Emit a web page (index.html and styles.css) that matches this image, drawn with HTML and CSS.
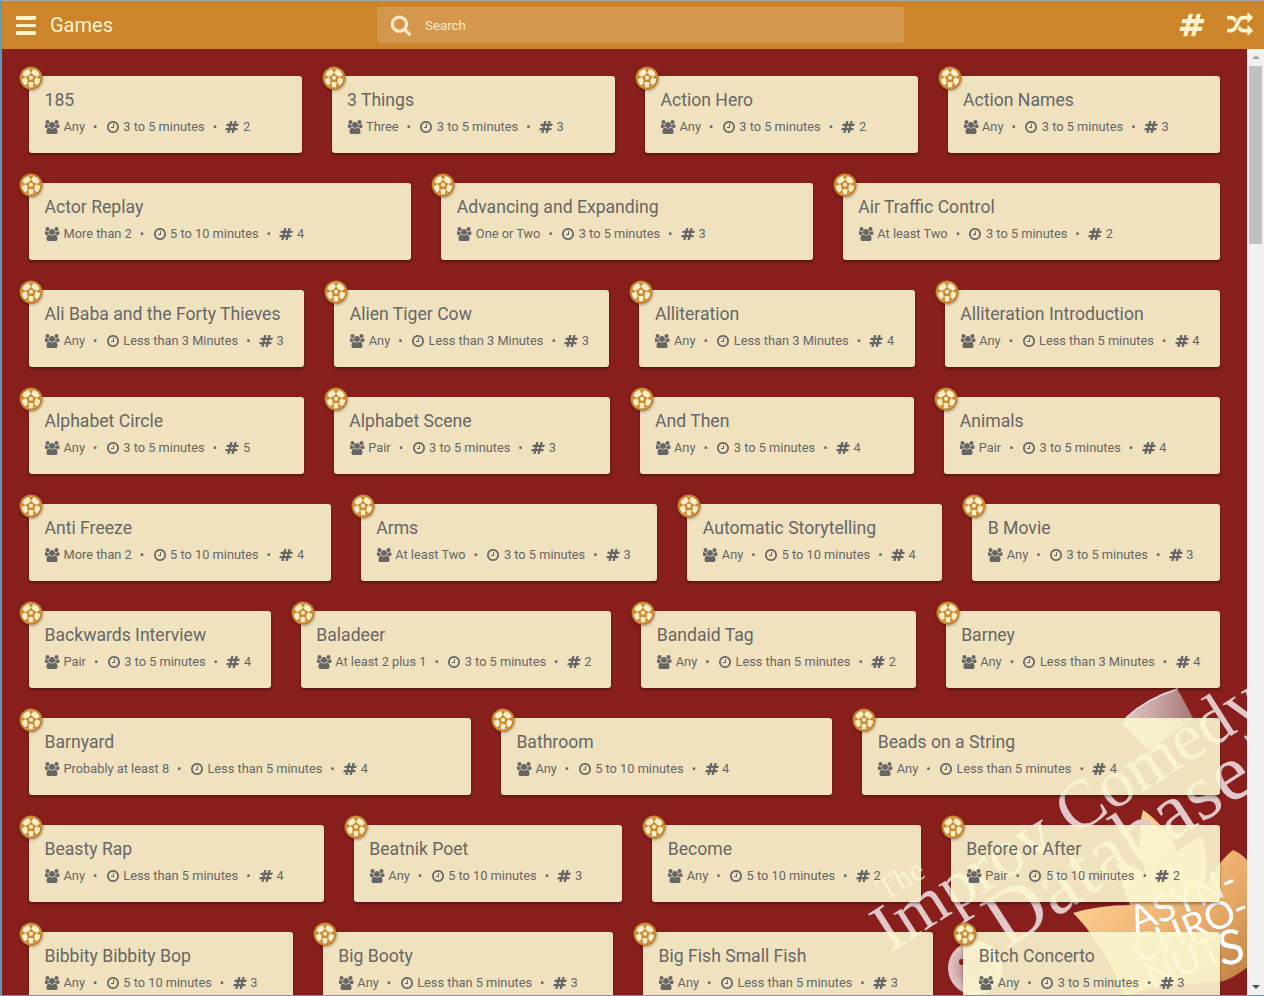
FILE: index.html
```html
<!DOCTYPE html>
<html lang="en">
<head>
<meta charset="utf-8">
<title>Games</title>
<link rel="stylesheet" href="styles.css">
</head>
<body>
<svg class="defs" width="0" height="0">
  <defs>
    <symbol id="i-users" viewBox="0 0 1920 1792"><path d="M529 896q-162 5-265 128h-134q-82 0-138-40.5t-56-118.5q0-353 124-353 6 0 43.5 21t97.5 42.5 119 21.5q67 0 133-23-5 37-5 66 0 139 81 256zm1071 637q0 120-73 189.5t-194 69.5h-874q-121 0-194-69.5t-73-189.5q0-53 3.5-103.5t14-109 26.5-108.5 43-97.5 62-81 85.5-53.5 111.5-20q10 0 43 21.5t73 48 107 48 135 21.5 135-21.5 107-48 73-48 43-21.5q61 0 111.5 20t85.5 53.5 62 81 43 97.5 26.5 108.5 14 109 3.5 103.5zm-1024-1277q0 106-75 181t-181 75-181-75-75-181 75-181 181-75 181 75 75 181zm704 384q0 159-112.5 271.5t-271.5 112.5-271.5-112.5-112.5-271.5 112.5-271.5 271.5-112.5 271.5 112.5 112.5 271.5zm576 225q0 78-56 118.5t-138 40.5h-134q-103-123-265-128 81-117 81-256 0-29-5-66 66 23 133 23 59 0 119-21.5t97.5-42.5 43.5-21q124 0 124 353zm-128-609q0 106-75 181t-181 75-181-75-75-181 75-181 181-75 181 75 75 181z"/></symbol>
    <symbol id="i-clock" viewBox="0 0 1792 1792"><path d="M1024 544v448q0 14-9 23t-23 9h-320q-14 0-23-9t-9-23v-64q0-14 9-23t23-9h224v-352q0-14 9-23t23-9h64q14 0 23 9t9 23zm416 352q0-148-73-273t-198-198-273-73-273 73-198 198-73 273 73 273 198 198 273 73 273-73 198-198 73-273zm224 0q0 209-103 385.5t-279.5 279.5-385.5 103-385.5-103-279.5-279.5-103-385.5 103-385.5 279.5-279.5 385.5-103 385.5 103 279.5 279.5 103 385.5z"/></symbol>
    <symbol id="i-hash" viewBox="0 0 1792 1792"><path d="M991 1024l64-256h-254l-64 256h254zm768-504l-56 224q-7 24-31 24h-327l-64 256h311q15 0 25 12 10 14 6 28l-56 224q-5 24-31 24h-327l-81 328q-7 24-31 24h-224q-16 0-26-12-9-12-6-28l78-312h-254l-81 328q-7 24-31 24h-225q-15 0-25-12-9-12-6-28l78-312h-311q-15 0-25-12-9-12-6-28l56-224q7-24 31-24h327l64-256h-311q-15 0-25-12-10-14-6-28l56-224q5-24 31-24h327l81-328q7-24 32-24h224q15 0 25 12 9 12 6 28l-78 312h254l81-328q7-24 32-24h224q15 0 25 12 9 12 6 28l-78 312h311q15 0 25 12 9 12 6 28z"/></symbol>
    <symbol id="i-random" viewBox="0 0 1792 1792"><path d="M666 481q-60 92-137 273-22-45-37-72.5t-40.5-63.5-51-56.5-63-35-81.5-14h-224q-14 0-23-9t-9-23v-192q0-14 9-23t23-9h224q250 0 410 225zm1126 799q0 14-9 23l-320 320q-9 9-23 9-13 0-22.5-9.5t-9.5-22.5v-192q-32 0-85 .5t-81 1-73-1-71-5-64-10.5-63-18.5-58-28.5-59-40-55-53.5-56-69.5q59-93 136-273 22 45 37 72.5t40.5 63.5 51 56.5 63 35 81.5 14h256v-192q0-14 9-23t23-9q12 0 24 10l319 319q9 9 9 23zm0-896q0 14-9 23l-320 320q-9 9-23 9-13 0-22.5-9.5t-9.5-22.5v-192h-256q-48 0-87 15t-69 45-51 61.5-45 77.5q-32 62-78 171-29 66-49.5 111t-54 105-64 100-74 83-90 68.5-106.5 42-128 16.5h-224q-14 0-23-9t-9-23v-192q0-14 9-23t23-9h224q48 0 87-15t69-45 51-61.5 45-77.5q32-62 78-171 29-66 49.5-111t54-105 64-100 74-83 90-68.5 106.5-42 128-16.5h256v-192q0-14 9-23t23-9q12 0 24 10l319 319q9 9 9 23z"/></symbol>
    <symbol id="i-search" viewBox="0 0 1792 1792"><path d="M1216 832q0-185-131.5-316.5t-316.5-131.5-316.5 131.5-131.5 316.5 131.5 316.5 316.5 131.5 316.5-131.5 131.5-316.5zm512 832q0 52-38 90t-90 38q-54 0-90-38l-343-342q-179 124-399 124-143 0-273.5-55.5t-225-150-150-225-55.5-273.5 55.5-273.5 150-225 225-150 273.5-55.5 273.5 55.5 225 150 150 225 55.5 273.5q0 220-124 399l343 343q37 37 37 90z"/></symbol>
    <symbol id="i-badge" viewBox="0 0 24 24">
      <circle cx="12" cy="12" r="11.5" fill="#c9832c"/>
      <circle cx="12" cy="12" r="9.4" fill="#fbeecb"/>
      <path d="M12 6.6 14.6 9.6 17.6 10.4 15.6 13.4 15.6 17 12 15.8 8.4 17 8.4 13.4 6.4 10.4 9.4 9.6Z" fill="#cf8a30"/>
      <path d="M9.6 3 14.4 3 12 7ZM20.8 8.6 21.6 13.2 17.2 11.4ZM18 19.6 13.8 21.2 14.6 16.6ZM6 19.6 10.2 21.2 9.4 16.6ZM3.2 8.6 2.4 13.2 6.8 11.4Z" fill="#cf8a30"/>
      <circle cx="12" cy="11.8" r="2" fill="#fbeecb"/>
    </symbol>
    <linearGradient id="g-leaf" x1="0" y1="0" x2="1" y2="1">
      <stop offset="0.25" stop-color="#ffcf92"/>
      <stop offset="0.7" stop-color="#e5a766"/>
      <stop offset="1" stop-color="#b5783a"/>
    </linearGradient>
    <linearGradient id="g-cup" x1="0" y1="0" x2="1" y2="0">
      <stop offset="0" stop-color="#e6cccc"/>
      <stop offset="1" stop-color="#a87878"/>
    </linearGradient>
    <radialGradient id="g-disc">
      <stop offset="0" stop-color="#a86f70"/>
      <stop offset="1" stop-color="#e3c8c8"/>
    </radialGradient>
  </defs>
</svg>
<div class="frame">
  <header class="topbar">
    <div class="menu-icon"><span></span><span></span><span></span></div>
    <h1 class="brand">Games</h1>
    <div class="search">
      <svg class="search-icon"><use href="#i-search"/></svg>
      <span class="search-text">Search</span>
    </div>
    <svg class="top-hash"><use href="#i-hash"/></svg>
    <svg class="top-random"><use href="#i-random"/></svg>
  </header>
  <div class="body-row">
    <main class="content">
      <svg class="watermark" viewBox="840 680 407 315" width="407" height="315">
        <path class="wm-cup" d="M1122 723Q1145 700 1178 690L1193 718L1150 752Z"/>
        <path class="wm-rim" d="M1126 718Q1148 698 1178 689"/>
        <circle class="wm-disc" cx="975" cy="968" r="27"/>
        <circle class="wm-hole" cx="962" cy="962" r="3"/>
        <path class="wm-leaf" d="M1143 810Q1165 825 1178 852Q1188 840 1202 837Q1210 860 1205 885Q1220 860 1233 850Q1245 855 1250 865L1250 965Q1235 978 1220 982L1160 985L1125 996Q1110 960 1093 937Q1085 925 1073 913Q1100 905 1130 905Q1122 885 1117 863Q1130 862 1146 875Q1135 840 1143 810Z"/>
        <text class="wm-serif wm-the" transform="translate(884 901) rotate(-30)">The</text>
        <text class="wm-serif wm-improv" transform="translate(890 953) rotate(-32.5)">Improv Comedy</text>
        <text class="wm-serif wm-data" transform="translate(1006 950) rotate(-33)">Database</text>
        <text class="wm-sans wm-its" transform="translate(1180 890) rotate(-23)">its</text>
        <text class="wm-sans wm-l1" transform="translate(1136 934) rotate(-23)">ASYN-</text>
        <text class="wm-sans wm-l2" transform="translate(1139 964) rotate(-23)">CHRO-</text>
        <text class="wm-sans wm-l3" transform="translate(1152 990) rotate(-23)">NUT</text>
        <text class="wm-sans wm-s" transform="translate(1221 966) rotate(-10)">S</text>
      </svg>

      <section class="row">
        <article class="card"><svg class="badge"><use href="#i-badge"/></svg><h2>185</h2><p class="meta"><svg class="ic-users"><use href="#i-users"/></svg><span>Any</span><b>•</b><svg class="ic"><use href="#i-clock"/></svg><span>3 to 5 minutes</span><b>•</b><svg class="ic"><use href="#i-hash"/></svg><span>2</span></p></article>
        <article class="card"><svg class="badge"><use href="#i-badge"/></svg><h2>3 Things</h2><p class="meta"><svg class="ic-users"><use href="#i-users"/></svg><span>Three</span><b>•</b><svg class="ic"><use href="#i-clock"/></svg><span>3 to 5 minutes</span><b>•</b><svg class="ic"><use href="#i-hash"/></svg><span>3</span></p></article>
        <article class="card"><svg class="badge"><use href="#i-badge"/></svg><h2>Action Hero</h2><p class="meta"><svg class="ic-users"><use href="#i-users"/></svg><span>Any</span><b>•</b><svg class="ic"><use href="#i-clock"/></svg><span>3 to 5 minutes</span><b>•</b><svg class="ic"><use href="#i-hash"/></svg><span>2</span></p></article>
        <article class="card"><svg class="badge"><use href="#i-badge"/></svg><h2>Action Names</h2><p class="meta"><svg class="ic-users"><use href="#i-users"/></svg><span>Any</span><b>•</b><svg class="ic"><use href="#i-clock"/></svg><span>3 to 5 minutes</span><b>•</b><svg class="ic"><use href="#i-hash"/></svg><span>3</span></p></article>
      </section>
      <section class="row">
        <article class="card"><svg class="badge"><use href="#i-badge"/></svg><h2>Actor Replay</h2><p class="meta"><svg class="ic-users"><use href="#i-users"/></svg><span>More than 2</span><b>•</b><svg class="ic"><use href="#i-clock"/></svg><span>5 to 10 minutes</span><b>•</b><svg class="ic"><use href="#i-hash"/></svg><span>4</span></p></article>
        <article class="card"><svg class="badge"><use href="#i-badge"/></svg><h2>Advancing and Expanding</h2><p class="meta"><svg class="ic-users"><use href="#i-users"/></svg><span>One or Two</span><b>•</b><svg class="ic"><use href="#i-clock"/></svg><span>3 to 5 minutes</span><b>•</b><svg class="ic"><use href="#i-hash"/></svg><span>3</span></p></article>
        <article class="card"><svg class="badge"><use href="#i-badge"/></svg><h2>Air Traffic Control</h2><p class="meta"><svg class="ic-users"><use href="#i-users"/></svg><span>At least Two</span><b>•</b><svg class="ic"><use href="#i-clock"/></svg><span>3 to 5 minutes</span><b>•</b><svg class="ic"><use href="#i-hash"/></svg><span>2</span></p></article>
      </section>
      <section class="row">
        <article class="card"><svg class="badge"><use href="#i-badge"/></svg><h2>Ali Baba and the Forty Thieves</h2><p class="meta"><svg class="ic-users"><use href="#i-users"/></svg><span>Any</span><b>•</b><svg class="ic"><use href="#i-clock"/></svg><span>Less than 3 Minutes</span><b>•</b><svg class="ic"><use href="#i-hash"/></svg><span>3</span></p></article>
        <article class="card"><svg class="badge"><use href="#i-badge"/></svg><h2>Alien Tiger Cow</h2><p class="meta"><svg class="ic-users"><use href="#i-users"/></svg><span>Any</span><b>•</b><svg class="ic"><use href="#i-clock"/></svg><span>Less than 3 Minutes</span><b>•</b><svg class="ic"><use href="#i-hash"/></svg><span>3</span></p></article>
        <article class="card"><svg class="badge"><use href="#i-badge"/></svg><h2>Alliteration</h2><p class="meta"><svg class="ic-users"><use href="#i-users"/></svg><span>Any</span><b>•</b><svg class="ic"><use href="#i-clock"/></svg><span>Less than 3 Minutes</span><b>•</b><svg class="ic"><use href="#i-hash"/></svg><span>4</span></p></article>
        <article class="card"><svg class="badge"><use href="#i-badge"/></svg><h2>Alliteration Introduction</h2><p class="meta"><svg class="ic-users"><use href="#i-users"/></svg><span>Any</span><b>•</b><svg class="ic"><use href="#i-clock"/></svg><span>Less than 5 minutes</span><b>•</b><svg class="ic"><use href="#i-hash"/></svg><span>4</span></p></article>
      </section>
      <section class="row">
        <article class="card"><svg class="badge"><use href="#i-badge"/></svg><h2>Alphabet Circle</h2><p class="meta"><svg class="ic-users"><use href="#i-users"/></svg><span>Any</span><b>•</b><svg class="ic"><use href="#i-clock"/></svg><span>3 to 5 minutes</span><b>•</b><svg class="ic"><use href="#i-hash"/></svg><span>5</span></p></article>
        <article class="card"><svg class="badge"><use href="#i-badge"/></svg><h2>Alphabet Scene</h2><p class="meta"><svg class="ic-users"><use href="#i-users"/></svg><span>Pair</span><b>•</b><svg class="ic"><use href="#i-clock"/></svg><span>3 to 5 minutes</span><b>•</b><svg class="ic"><use href="#i-hash"/></svg><span>3</span></p></article>
        <article class="card"><svg class="badge"><use href="#i-badge"/></svg><h2>And Then</h2><p class="meta"><svg class="ic-users"><use href="#i-users"/></svg><span>Any</span><b>•</b><svg class="ic"><use href="#i-clock"/></svg><span>3 to 5 minutes</span><b>•</b><svg class="ic"><use href="#i-hash"/></svg><span>4</span></p></article>
        <article class="card"><svg class="badge"><use href="#i-badge"/></svg><h2>Animals</h2><p class="meta"><svg class="ic-users"><use href="#i-users"/></svg><span>Pair</span><b>•</b><svg class="ic"><use href="#i-clock"/></svg><span>3 to 5 minutes</span><b>•</b><svg class="ic"><use href="#i-hash"/></svg><span>4</span></p></article>
      </section>
      <section class="row">
        <article class="card"><svg class="badge"><use href="#i-badge"/></svg><h2>Anti Freeze</h2><p class="meta"><svg class="ic-users"><use href="#i-users"/></svg><span>More than 2</span><b>•</b><svg class="ic"><use href="#i-clock"/></svg><span>5 to 10 minutes</span><b>•</b><svg class="ic"><use href="#i-hash"/></svg><span>4</span></p></article>
        <article class="card"><svg class="badge"><use href="#i-badge"/></svg><h2>Arms</h2><p class="meta"><svg class="ic-users"><use href="#i-users"/></svg><span>At least Two</span><b>•</b><svg class="ic"><use href="#i-clock"/></svg><span>3 to 5 minutes</span><b>•</b><svg class="ic"><use href="#i-hash"/></svg><span>3</span></p></article>
        <article class="card"><svg class="badge"><use href="#i-badge"/></svg><h2>Automatic Storytelling</h2><p class="meta"><svg class="ic-users"><use href="#i-users"/></svg><span>Any</span><b>•</b><svg class="ic"><use href="#i-clock"/></svg><span>5 to 10 minutes</span><b>•</b><svg class="ic"><use href="#i-hash"/></svg><span>4</span></p></article>
        <article class="card"><svg class="badge"><use href="#i-badge"/></svg><h2>B Movie</h2><p class="meta"><svg class="ic-users"><use href="#i-users"/></svg><span>Any</span><b>•</b><svg class="ic"><use href="#i-clock"/></svg><span>3 to 5 minutes</span><b>•</b><svg class="ic"><use href="#i-hash"/></svg><span>3</span></p></article>
      </section>
      <section class="row">
        <article class="card"><svg class="badge"><use href="#i-badge"/></svg><h2>Backwards Interview</h2><p class="meta"><svg class="ic-users"><use href="#i-users"/></svg><span>Pair</span><b>•</b><svg class="ic"><use href="#i-clock"/></svg><span>3 to 5 minutes</span><b>•</b><svg class="ic"><use href="#i-hash"/></svg><span>4</span></p></article>
        <article class="card"><svg class="badge"><use href="#i-badge"/></svg><h2>Baladeer</h2><p class="meta"><svg class="ic-users"><use href="#i-users"/></svg><span>At least 2 plus 1</span><b>•</b><svg class="ic"><use href="#i-clock"/></svg><span>3 to 5 minutes</span><b>•</b><svg class="ic"><use href="#i-hash"/></svg><span>2</span></p></article>
        <article class="card"><svg class="badge"><use href="#i-badge"/></svg><h2>Bandaid Tag</h2><p class="meta"><svg class="ic-users"><use href="#i-users"/></svg><span>Any</span><b>•</b><svg class="ic"><use href="#i-clock"/></svg><span>Less than 5 minutes</span><b>•</b><svg class="ic"><use href="#i-hash"/></svg><span>2</span></p></article>
        <article class="card"><svg class="badge"><use href="#i-badge"/></svg><h2>Barney</h2><p class="meta"><svg class="ic-users"><use href="#i-users"/></svg><span>Any</span><b>•</b><svg class="ic"><use href="#i-clock"/></svg><span>Less than 3 Minutes</span><b>•</b><svg class="ic"><use href="#i-hash"/></svg><span>4</span></p></article>
      </section>
      <section class="row">
        <article class="card"><svg class="badge"><use href="#i-badge"/></svg><h2>Barnyard</h2><p class="meta"><svg class="ic-users"><use href="#i-users"/></svg><span>Probably at least 8</span><b>•</b><svg class="ic"><use href="#i-clock"/></svg><span>Less than 5 minutes</span><b>•</b><svg class="ic"><use href="#i-hash"/></svg><span>4</span></p></article>
        <article class="card"><svg class="badge"><use href="#i-badge"/></svg><h2>Bathroom</h2><p class="meta"><svg class="ic-users"><use href="#i-users"/></svg><span>Any</span><b>•</b><svg class="ic"><use href="#i-clock"/></svg><span>5 to 10 minutes</span><b>•</b><svg class="ic"><use href="#i-hash"/></svg><span>4</span></p></article>
        <article class="card"><svg class="badge"><use href="#i-badge"/></svg><h2>Beads on a String</h2><p class="meta"><svg class="ic-users"><use href="#i-users"/></svg><span>Any</span><b>•</b><svg class="ic"><use href="#i-clock"/></svg><span>Less than 5 minutes</span><b>•</b><svg class="ic"><use href="#i-hash"/></svg><span>4</span></p></article>
      </section>
      <section class="row">
        <article class="card"><svg class="badge"><use href="#i-badge"/></svg><h2>Beasty Rap</h2><p class="meta"><svg class="ic-users"><use href="#i-users"/></svg><span>Any</span><b>•</b><svg class="ic"><use href="#i-clock"/></svg><span>Less than 5 minutes</span><b>•</b><svg class="ic"><use href="#i-hash"/></svg><span>4</span></p></article>
        <article class="card"><svg class="badge"><use href="#i-badge"/></svg><h2>Beatnik Poet</h2><p class="meta"><svg class="ic-users"><use href="#i-users"/></svg><span>Any</span><b>•</b><svg class="ic"><use href="#i-clock"/></svg><span>5 to 10 minutes</span><b>•</b><svg class="ic"><use href="#i-hash"/></svg><span>3</span></p></article>
        <article class="card"><svg class="badge"><use href="#i-badge"/></svg><h2>Become</h2><p class="meta"><svg class="ic-users"><use href="#i-users"/></svg><span>Any</span><b>•</b><svg class="ic"><use href="#i-clock"/></svg><span>5 to 10 minutes</span><b>•</b><svg class="ic"><use href="#i-hash"/></svg><span>2</span></p></article>
        <article class="card"><svg class="badge"><use href="#i-badge"/></svg><h2>Before or After</h2><p class="meta"><svg class="ic-users"><use href="#i-users"/></svg><span>Pair</span><b>•</b><svg class="ic"><use href="#i-clock"/></svg><span>5 to 10 minutes</span><b>•</b><svg class="ic"><use href="#i-hash"/></svg><span>2</span></p></article>
      </section>
      <section class="row">
        <article class="card"><svg class="badge"><use href="#i-badge"/></svg><h2>Bibbity Bibbity Bop</h2><p class="meta"><svg class="ic-users"><use href="#i-users"/></svg><span>Any</span><b>•</b><svg class="ic"><use href="#i-clock"/></svg><span>5 to 10 minutes</span><b>•</b><svg class="ic"><use href="#i-hash"/></svg><span>3</span></p></article>
        <article class="card"><svg class="badge"><use href="#i-badge"/></svg><h2>Big Booty</h2><p class="meta"><svg class="ic-users"><use href="#i-users"/></svg><span>Any</span><b>•</b><svg class="ic"><use href="#i-clock"/></svg><span>Less than 5 minutes</span><b>•</b><svg class="ic"><use href="#i-hash"/></svg><span>3</span></p></article>
        <article class="card"><svg class="badge"><use href="#i-badge"/></svg><h2>Big Fish Small Fish</h2><p class="meta"><svg class="ic-users"><use href="#i-users"/></svg><span>Any</span><b>•</b><svg class="ic"><use href="#i-clock"/></svg><span>Less than 5 minutes</span><b>•</b><svg class="ic"><use href="#i-hash"/></svg><span>3</span></p></article>
        <article class="card"><svg class="badge"><use href="#i-badge"/></svg><h2>Bitch Concerto</h2><p class="meta"><svg class="ic-users"><use href="#i-users"/></svg><span>Any</span><b>•</b><svg class="ic"><use href="#i-clock"/></svg><span>3 to 5 minutes</span><b>•</b><svg class="ic"><use href="#i-hash"/></svg><span>3</span></p></article>
      </section>
    </main>
    <div class="scrollbar">
      <span class="arrow-up"></span>
      <span class="thumb"></span>
      <span class="arrow-down"></span>
    </div>
  </div>
</div>
</body>
</html>
```
FILE: styles.css
```css
* { box-sizing: border-box; }
html, body { margin: 0; height: 100%; overflow: hidden; }
body { font-family: Roboto, "Liberation Sans", sans-serif; background: #5b9bb5; }
.defs { position: absolute; }

.frame {
  height: 996px;
  display: flex;
  flex-direction: column;
  border-top: 1px solid #a8a8a8;
  border-left: 2px solid #5b9bb5;
  border-bottom: 1px solid #5b9bc0;
}

.topbar {
  flex: 0 0 48px;
  display: flex;
  align-items: center;
  background: #cc852b;
  color: #fff3cd;
  padding-left: 14px;
}
.menu-icon { width: 20px; display: flex; flex-direction: column; gap: 4px; margin-top: 1px; }
.menu-icon span { height: 3.5px; background: #fff3cd; border-radius: 1px; }
.brand { margin: 0 0 0 14px; width: 327px; font-size: 20px; font-weight: 400; line-height: 24px; }
.search {
  width: 527px;
  height: 36px;
  display: flex;
  align-items: center;
  background: rgba(255, 255, 255, 0.16);
  border-radius: 2px;
  padding-left: 13px;
}
.search-icon { width: 22px; height: 22px; fill: #fbe9c8; }
.search-text { margin-left: 13px; font-size: 13.3px; color: #fbe6c6; }
.top-hash { width: 26px; height: 26px; margin-left: 275px; fill: #fff3cd; }
.top-random { width: 26px; height: 26px; margin-left: 22px; fill: #fff3cd; }

.body-row { flex: 1; min-height: 0; display: flex; }
.content {
  position: relative;
  flex: 1;
  min-width: 0;
  overflow: hidden;
  background: #881f1c;
  padding: 27px 27px 0;
  display: flex;
  flex-direction: column;
  gap: 30px;
}
.watermark { position: absolute; right: 0; bottom: 0; }
.wm-cup { fill: url(#g-cup); }
.wm-rim { fill: none; stroke: #ecd9d9; stroke-width: 2; }
.wm-disc { fill: url(#g-disc); }
.wm-hole { fill: #881f1c; }
.wm-leaf { fill: url(#g-leaf); }
.wm-serif { font-family: "Liberation Serif", serif; fill: #e2c8c8; }
.wm-the { font-size: 32px; }
.wm-improv { font-size: 68px; }
.wm-data { font-size: 80px; letter-spacing: 1px; }
.wm-sans { font-family: Lato, "Open Sans", sans-serif; font-weight: 400; fill: #fff; }
.wm-its { font-size: 15px; fill: #f5dcb5; }
.wm-l1, .wm-l2, .wm-l3 { font-size: 38px; }
.wm-s { font-size: 48px; }

.row { position: relative; display: flex; gap: 30px; flex: 0 0 77px; }
.card {
  position: relative;
  flex: 1 1 auto;
  height: 77px;
  padding: 12px 19px 0 15.5px;
  background: rgba(252, 247, 208, 0.9);
  border-radius: 3px;
  box-shadow: 0 2px 3px rgba(0, 0, 0, 0.35);
  color: #666;
}
.badge {
  position: absolute;
  left: -10px;
  top: -10px;
  width: 24px;
  height: 24px;
  filter: drop-shadow(0 1px 1.5px rgba(0, 0, 0, 0.4));
}
.card h2 { margin: 0; font-size: 17.6px; font-weight: 400; line-height: 24px; white-space: nowrap; }
.meta { margin: 7px 0 0; display: flex; align-items: center; height: 16px; font-size: 12.8px; line-height: 16px; white-space: nowrap; }
.meta svg { fill: #666; flex: none; margin: 0 3.5px 0 0.5px; }
.ic-users { width: 15px; height: 14px; }
.ic { width: 14px; height: 14px; }
.meta b { font-weight: 400; margin: 0 8px; }

.scrollbar {
  flex: 0 0 17px;
  position: relative;
  background: #f1f1f1;
  display: flex;
  flex-direction: column;
  align-items: center;
  padding-top: 6px;
}
.arrow-up { width: 0; height: 0; border-left: 4px solid transparent; border-right: 4px solid transparent; border-bottom: 4px solid #a3a3a3; }
.thumb { width: 13px; height: 178px; margin-top: 7px; background: #c1c1c1; }
.arrow-down { margin-top: auto; margin-bottom: 6px; width: 0; height: 0; border-left: 4px solid transparent; border-right: 4px solid transparent; border-top: 4px solid #505050; }
```
